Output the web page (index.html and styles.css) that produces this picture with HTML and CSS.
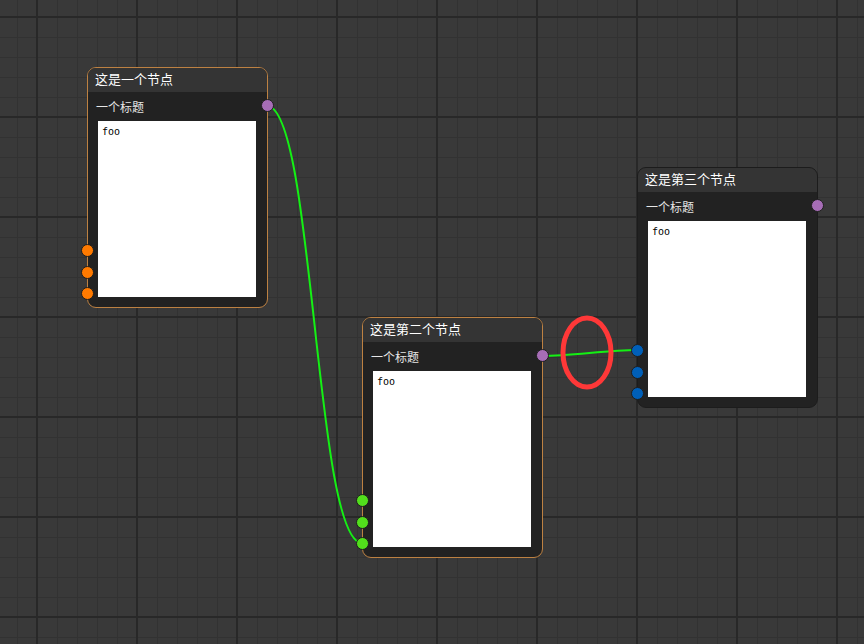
FILE: index.html
```html
<!DOCTYPE html>
<html lang="zh-CN">
<head>
<meta charset="utf-8">
<title>节点图</title>
<link rel="stylesheet" href="styles.css">
</head>
<body>
<div class="canvas">
  <svg class="links" width="864" height="644" viewBox="0 0 864 644">
    <path class="link" d="M267,106 C314,106 315,543 362,543"/>
    <path class="link" d="M542,356 C572,356 607,350 637,350"/>
  </svg>

  <div class="node selected n1">
    <div class="node-title">这是一个节点</div>
    <div class="node-body">
      <div class="node-subtitle">一个标题</div>
      <div class="node-text">foo</div>
    </div>
    <span class="port out purple"></span>
    <div class="inputs">
      <span class="port orange"></span>
      <span class="port orange"></span>
      <span class="port orange"></span>
    </div>
  </div>

  <div class="node selected n2">
    <div class="node-title">这是第二个节点</div>
    <div class="node-body">
      <div class="node-subtitle">一个标题</div>
      <div class="node-text">foo</div>
    </div>
    <span class="port out purple"></span>
    <div class="inputs">
      <span class="port green"></span>
      <span class="port green"></span>
      <span class="port green"></span>
    </div>
  </div>

  <div class="node n3">
    <div class="node-title">这是第三个节点</div>
    <div class="node-body">
      <div class="node-subtitle">一个标题</div>
      <div class="node-text">foo</div>
    </div>
    <span class="port out purple"></span>
    <div class="inputs">
      <span class="port blue"></span>
      <span class="port blue"></span>
      <span class="port blue"></span>
    </div>
  </div>

  <svg class="marks" width="864" height="644" viewBox="0 0 864 644">
    <ellipse class="mark" cx="587" cy="352.5" rx="24" ry="34.5"/>
  </svg>
</div>
</body>
</html>
```

FILE: styles.css
```css
html, body {
  margin: 0;
  padding: 0;
  background: #393939;
}

.canvas {
  position: relative;
  width: 864px;
  height: 644px;
  overflow: hidden;
  background-color: #393939;
  background-image:
    linear-gradient(to right, #282828 0 2px, transparent 2px),
    linear-gradient(to bottom, #282828 0 2px, transparent 2px),
    linear-gradient(to right, #323232 0 1px, transparent 1px),
    linear-gradient(to bottom, #323232 0 1px, transparent 1px);
  background-size: 100px 100%, 100% 100px, 20px 100%, 100% 20px;
  background-position: 36px 0, 0 16px, 17px 0, 0 17px;
  font-family: "Noto Sans CJK SC", "Noto Sans", sans-serif;
}

.links, .marks {
  position: absolute;
  left: 0;
  top: 0;
}

.marks {
  z-index: 5;
}

.link {
  fill: none;
  stroke: #14f014;
  stroke-width: 2;
}

.mark {
  fill: none;
  stroke: #ff3838;
  stroke-width: 5;
}

.node {
  position: absolute;
  box-sizing: border-box;
  width: 181px;
  height: 241px;
  border: 1px solid #1c1c1c;
  border-radius: 9px;
  background: #222222;
  display: flex;
  flex-direction: column;
  z-index: 2;
}

.node.selected {
  border-color: #bd8142;
}

.n1 { left: 87px; top: 67px; }
.n2 { left: 362px; top: 317px; }
.n3 { left: 637px; top: 167px; }

.node-title {
  height: 24px;
  line-height: 21px;
  padding-left: 7px;
  background: #343434;
  border-radius: 8px 8px 0 0;
  color: #ffffff;
  font-size: 13px;
  white-space: nowrap;
}

.node-body {
  flex: 1;
  display: flex;
  flex-direction: column;
  padding: 0 11px 10px 10px;
}

.node-subtitle {
  height: 29px;
  box-sizing: border-box;
  padding-top: 6px;
  line-height: 18px;
  font-size: 12px;
  color: #e6e6e6;
  margin-left: -2px;
}

.node-text {
  height: 176px;
  background: #ffffff;
  box-sizing: border-box;
  padding: 4px 4px;
  font-family: "DejaVu Sans Mono", "Liberation Mono", monospace;
  font-size: 10px;
  line-height: 13px;
  color: #000000;
}

.port {
  display: block;
  box-sizing: border-box;
  width: 13px;
  height: 13px;
  border-radius: 50%;
  border: 1px solid #1e1e1e;
}

.port.out {
  position: absolute;
  right: -7px;
  top: 31px;
}

.inputs {
  position: absolute;
  left: -7.5px;
  top: 176px;
  display: flex;
  flex-direction: column;
  gap: 8.7px;
}

.purple { background: #a66db6; }
.orange { background: #ff7a00; }
.green { background: #52de1c; }
.blue { background: #005fb8; }
```
